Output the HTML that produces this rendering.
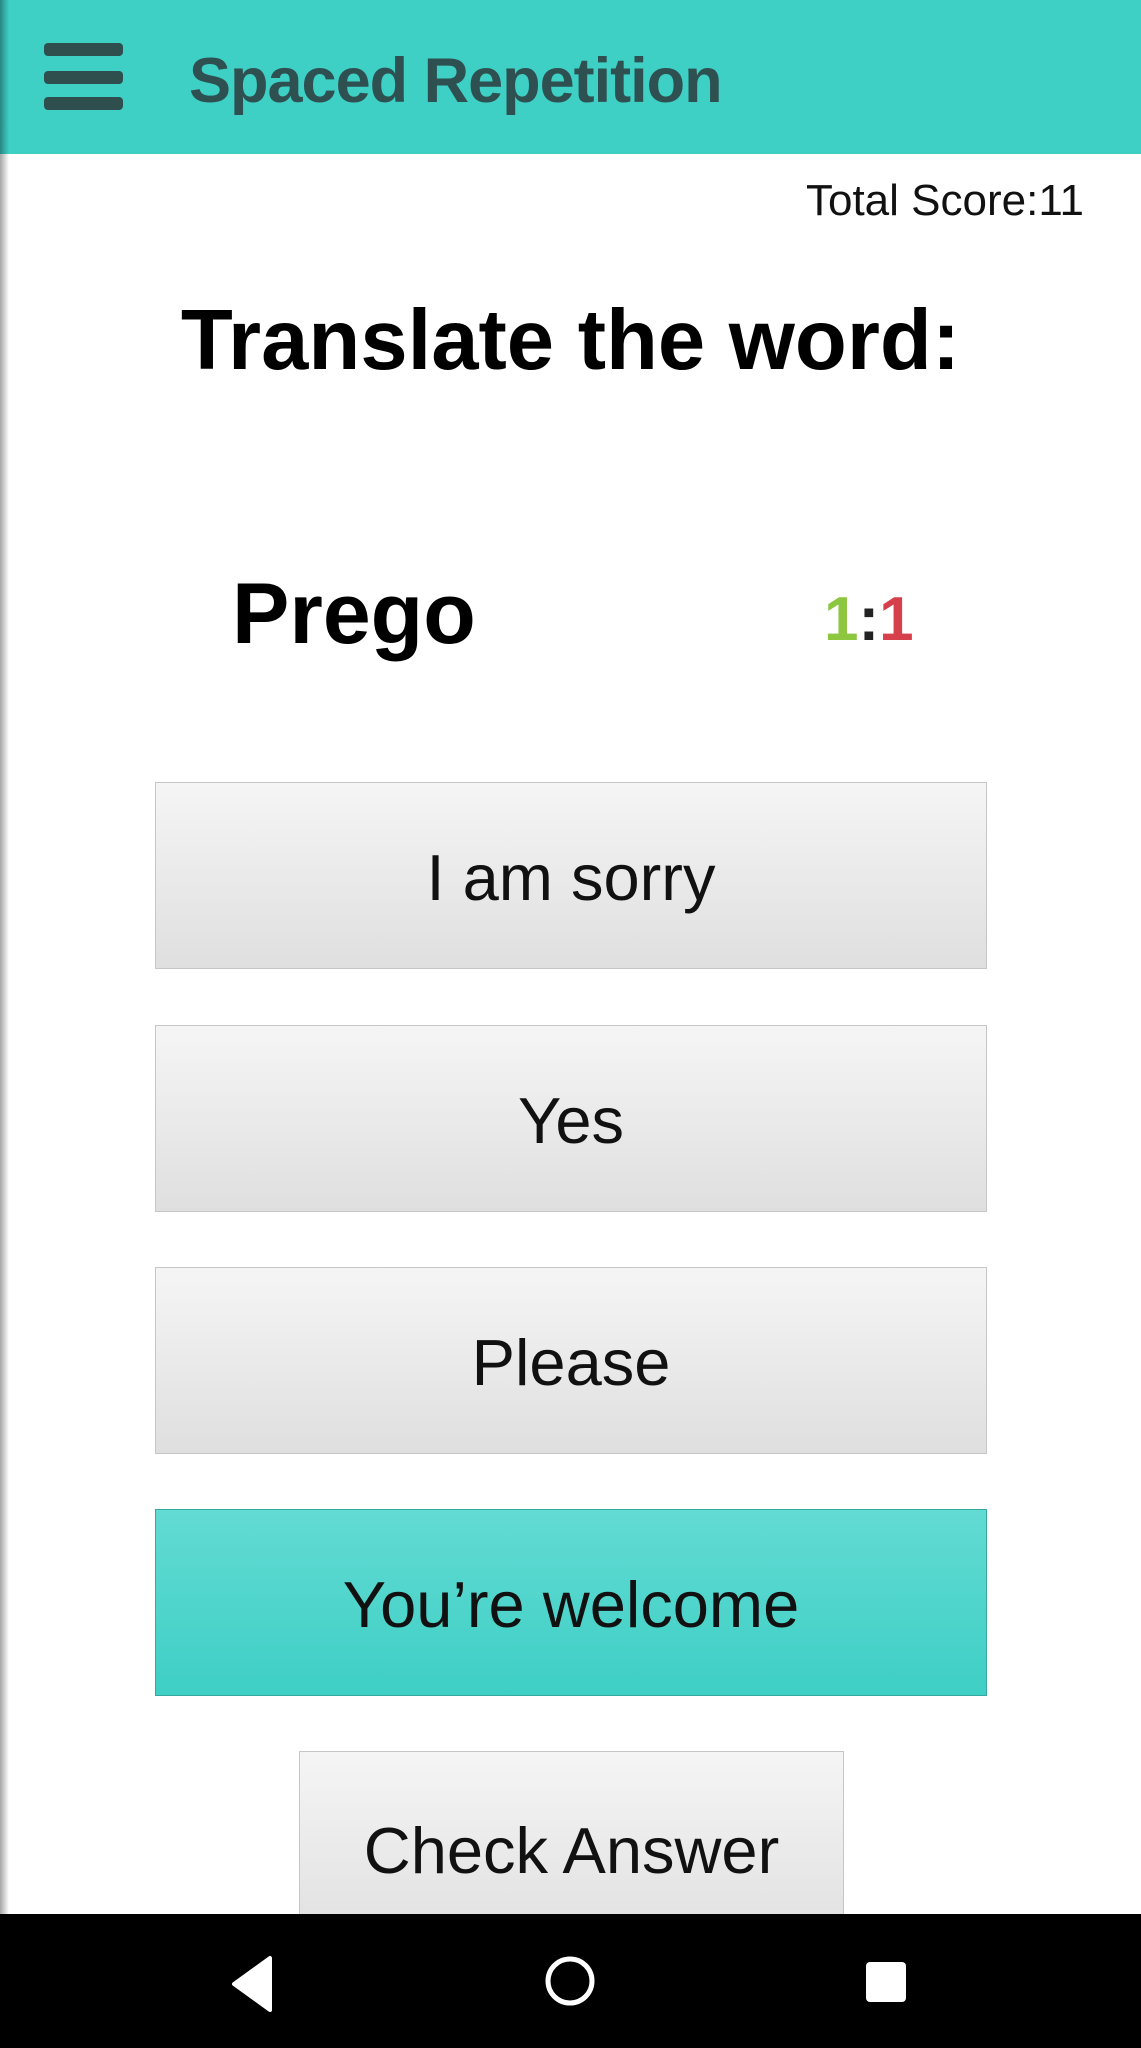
<!DOCTYPE html>
<html><head><meta charset="utf-8"><style>
body{margin:0;width:1141px;height:2048px;position:relative;overflow:hidden;background:#fff;font-family:"Liberation Sans",sans-serif;}
.hdr{position:absolute;left:0;top:0;width:1141px;height:154px;background:#3ecfc5;}
.bar{position:absolute;left:44px;width:79px;height:13px;border-radius:4px;background:#2f4f4f;}
.title{position:absolute;left:189px;top:45px;font-size:63px;color:#2f5050;font-weight:bold;letter-spacing:-1px;}
.shadow{position:absolute;left:0;top:0;width:9px;height:1914px;background:linear-gradient(90deg,rgba(0,0,0,0.35),rgba(0,0,0,0));}
.score{position:absolute;right:57px;top:176px;font-size:44px;color:#111;}
.tr{position:absolute;left:0;width:1141px;text-align:center;top:292px;font-size:85px;font-weight:bold;color:#000;}
.prego{position:absolute;left:232px;top:565px;font-size:86px;font-weight:bold;}
.ratio{position:absolute;left:824px;top:584px;font-size:62px;font-weight:bold;}
.btn{position:absolute;left:155px;width:832px;height:187px;border:1px solid #c6c6c6;background:linear-gradient(#f5f5f5,#dfdfdf);box-sizing:border-box;display:flex;align-items:center;justify-content:center;font-size:65px;color:#111;}
.nav{position:absolute;left:0;top:1914px;width:1141px;height:134px;background:#000;}
</style></head><body>
<div class="hdr">
<div class="bar" style="top:43px"></div><div class="bar" style="top:71px"></div><div class="bar" style="top:97px"></div>
<div class="title">Spaced Repetition</div>
</div>
<div class="shadow"></div>
<div class="score">Total Score:11</div>
<div class="tr">Translate the word:</div>
<div class="prego">Prego</div>
<div class="ratio"><span style="color:#8dc63f">1</span><span style="color:#222">:</span><span style="color:#d5404a">1</span></div>
<div class="btn" style="top:782px;padding-top:3px">I am sorry</div>
<div class="btn" style="top:1025px;padding-top:3px">Yes</div>
<div class="btn" style="top:1267px;padding-top:3px">Please</div>
<div class="btn" style="top:1509px;padding-top:3px;background:linear-gradient(#62dbd3,#3ecfc5);border-color:#36a89f">You’re welcome</div>
<div class="btn" style="top:1751px;left:299px;width:545px;height:200px;padding-bottom:2px">Check Answer</div>
<div class="nav">
<svg width="1141" height="134" style="position:absolute;left:0;top:0">
<path d="M270 44 L270 96 L234 70 Z" fill="#fff" stroke="#fff" stroke-width="4" stroke-linejoin="round"/>
<circle cx="570" cy="67" r="22" fill="none" stroke="#fff" stroke-width="5"/>
<rect x="866" y="48" width="40" height="40" rx="4" fill="#fff"/>
</svg>
</div>
</body></html>
